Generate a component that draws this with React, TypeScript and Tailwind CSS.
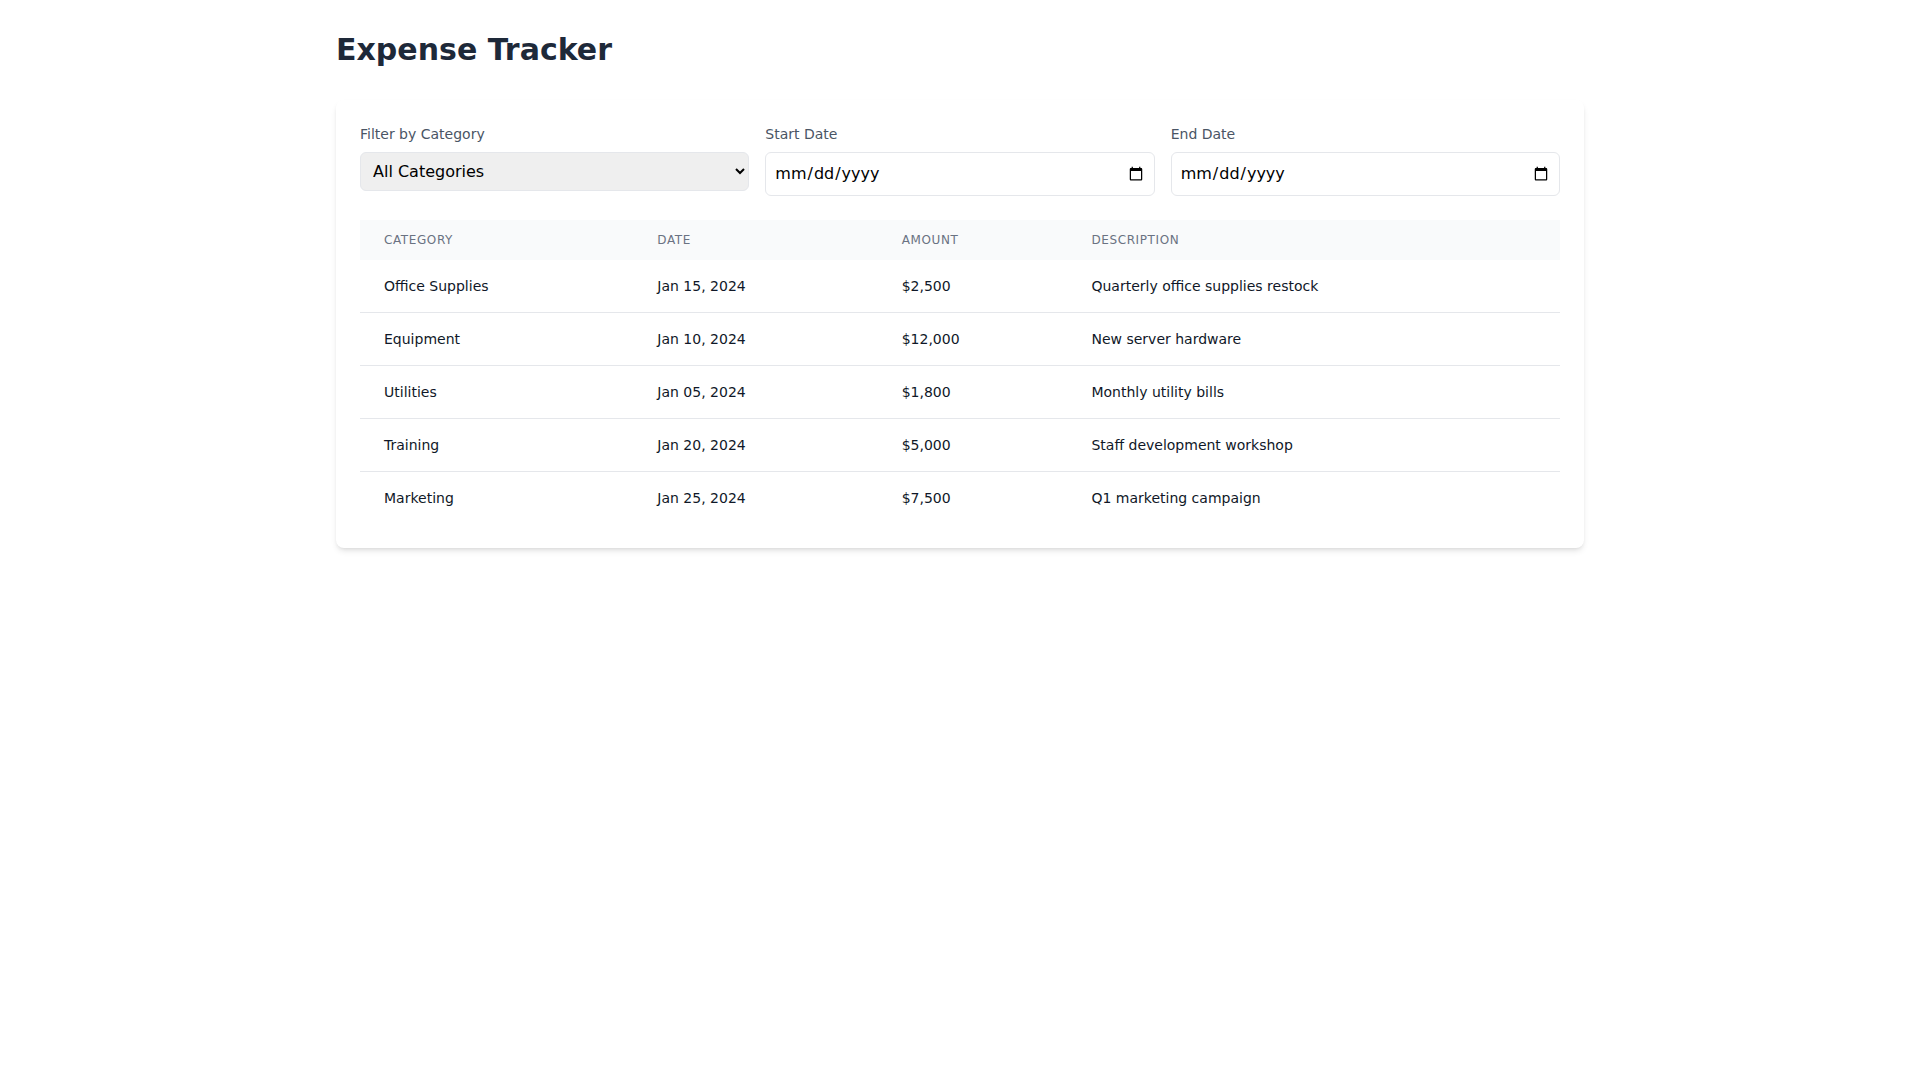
import { useState } from "react";

interface Expense {
  category: string;
  date: string;
  amount: string;
  description: string;
}

const EXPENSES: Expense[] = [
  { category: "Office Supplies", date: "Jan 15, 2024", amount: "$2,500", description: "Quarterly office supplies restock" },
  { category: "Equipment", date: "Jan 10, 2024", amount: "$12,000", description: "New server hardware" },
  { category: "Utilities", date: "Jan 05, 2024", amount: "$1,800", description: "Monthly utility bills" },
  { category: "Training", date: "Jan 20, 2024", amount: "$5,000", description: "Staff development workshop" },
  { category: "Marketing", date: "Jan 25, 2024", amount: "$7,500", description: "Q1 marketing campaign" },
];

const CATEGORIES = ["Office Supplies", "Equipment", "Utilities", "Training", "Marketing"];

export default function App() {
  const [category, setCategory] = useState("");
  const [startDate, setStartDate] = useState("");
  const [endDate, setEndDate] = useState("");

  return (
    <div className="min-h-screen bg-white font-['DejaVu_Sans',sans-serif]">
      <div className="max-w-7xl mx-auto px-4 py-8">
        <h1 className="text-3xl font-bold text-gray-800 mb-8">Expense Tracker</h1>

        <div className="bg-white rounded-lg shadow-md p-6">
          {/* Filters */}
          <div className="grid grid-cols-3 gap-4 mb-6">
            <div>
              <label className="block text-sm text-gray-600 mb-2">Filter by Category</label>
              <select
                value={category}
                onChange={(e) => setCategory(e.target.value)}
                className="w-full p-2 bg-[#efefef] border border-gray-200 rounded-md text-base text-black"
              >
                <option value="">All Categories</option>
                {CATEGORIES.map((c) => (
                  <option key={c} value={c}>
                    {c}
                  </option>
                ))}
              </select>
            </div>
            <div>
              <label className="block text-sm text-gray-600 mb-2">Start Date</label>
              <input
                type="date"
                value={startDate}
                onChange={(e) => setStartDate(e.target.value)}
                className="w-full px-2 py-[9px] bg-white border border-gray-200 rounded-md text-base text-black"
              />
            </div>
            <div>
              <label className="block text-sm text-gray-600 mb-2">End Date</label>
              <input
                type="date"
                value={endDate}
                onChange={(e) => setEndDate(e.target.value)}
                className="w-full px-2 py-[9px] bg-white border border-gray-200 rounded-md text-base text-black"
              />
            </div>
          </div>

          {/* Table */}
          <table className="w-full">
            <thead className="bg-gray-50">
              <tr>
                <th className="px-6 py-3 text-left text-xs font-normal text-gray-500 uppercase tracking-wider">Category</th>
                <th className="px-6 py-3 text-left text-xs font-normal text-gray-500 uppercase tracking-wider">Date</th>
                <th className="px-6 py-3 text-left text-xs font-normal text-gray-500 uppercase tracking-wider">Amount</th>
                <th className="px-6 py-3 text-left text-xs font-normal text-gray-500 uppercase tracking-wider">Description</th>
              </tr>
            </thead>
            <tbody className="divide-y divide-gray-200">
              {EXPENSES.map((e) => (
                <tr key={e.category}>
                  <td className="px-6 py-4 text-sm text-gray-900">{e.category}</td>
                  <td className="px-6 py-4 text-sm text-gray-900">{e.date}</td>
                  <td className="px-6 py-4 text-sm text-gray-900">{e.amount}</td>
                  <td className="px-6 py-4 text-sm text-gray-900">{e.description}</td>
                </tr>
              ))}
            </tbody>
          </table>
        </div>
      </div>
    </div>
  );
}
